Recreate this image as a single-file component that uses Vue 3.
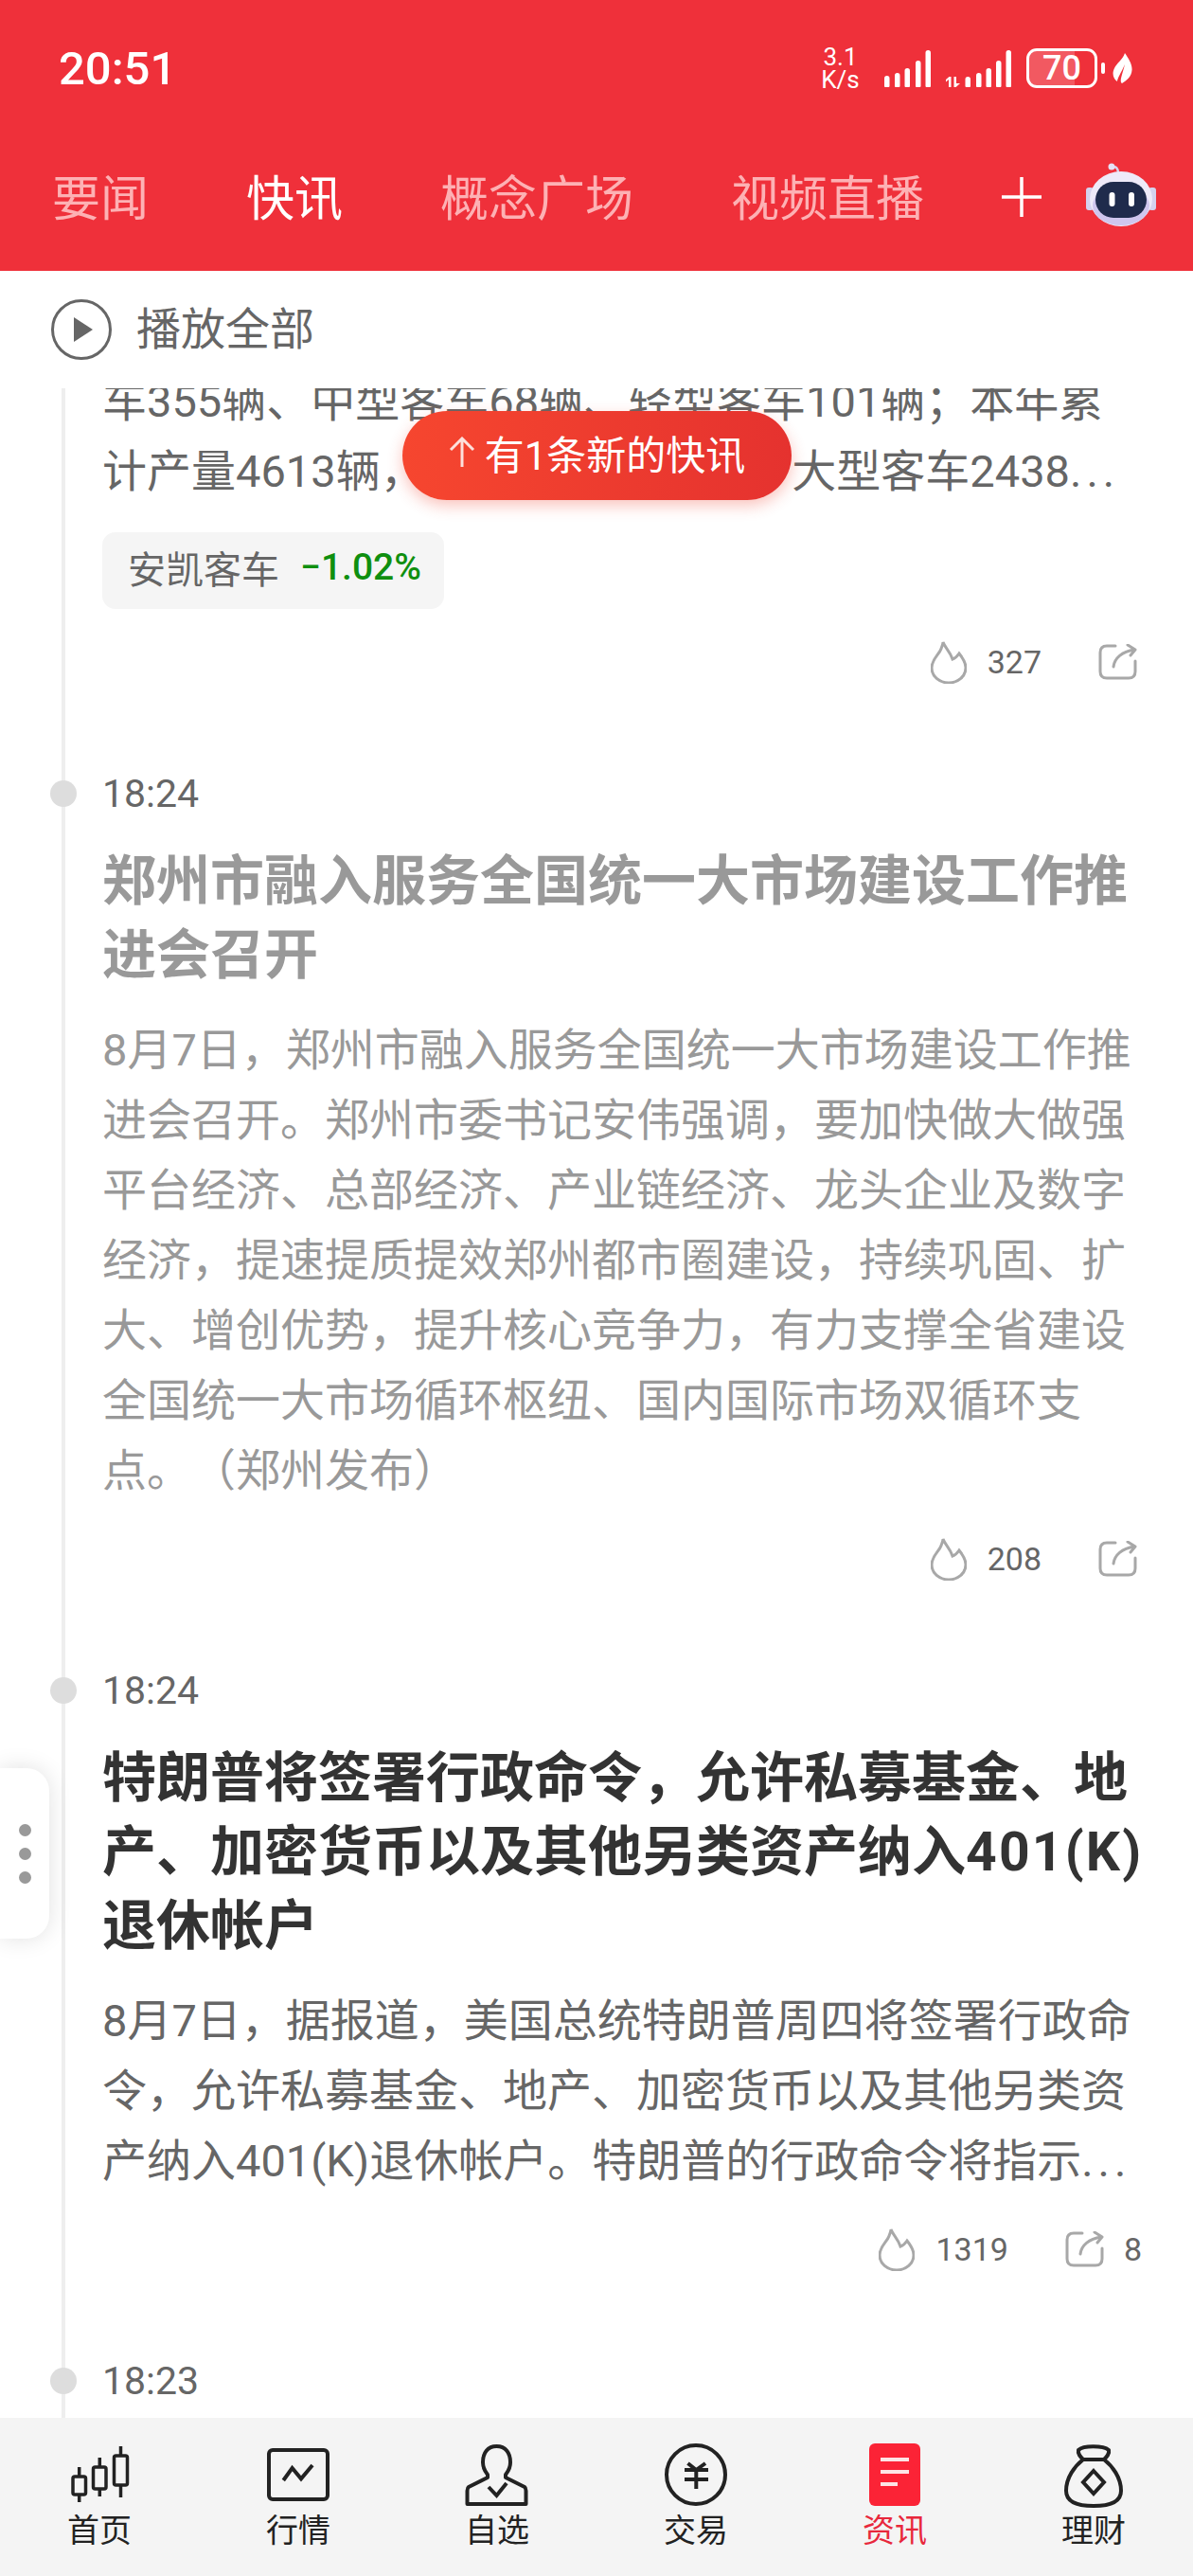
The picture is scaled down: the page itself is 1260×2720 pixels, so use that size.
<script setup>
const tabs = [
  { name: '要闻' },
  { name: '快讯', active: true },
  { name: '概念广场' },
  { name: '视频直播' },
]

const news = [
  {
    id: 1,
    lines: [
      '车355辆、中型客车68辆、轻型客车101辆；本年累',
      '计产量4613辆，\u3000\u3000\u3000\u3000\u3000\u3000\u3000\u3000 大型客车2438...',
    ],
    stock: { name: '安凯客车', change: '−1.02%' },
    hot: 327,
    partial: true,
  },
  {
    id: 2,
    time: '18:24',
    read: true,
    title: ['郑州市融入服务全国统一大市场建设工作推', '进会召开'],
    lines: [
      '8月7日，郑州市融入服务全国统一大市场建设工作推',
      '进会召开。郑州市委书记安伟强调，要加快做大做强',
      '平台经济、总部经济、产业链经济、龙头企业及数字',
      '经济，提速提质提效郑州都市圈建设，持续巩固、扩',
      '大、增创优势，提升核心竞争力，有力支撑全省建设',
      '全国统一大市场循环枢纽、国内国际市场双循环支',
      '点。（郑州发布）',
    ],
    hot: 208,
  },
  {
    id: 3,
    time: '18:24',
    title: [
      '特朗普将签署行政命令，允许私募基金、地',
      '产、加密货币以及其他另类资产纳入401(K)',
      '退休帐户',
    ],
    lines: [
      '8月7日，据报道，美国总统特朗普周四将签署行政命',
      '令，允许私募基金、地产、加密货币以及其他另类资',
      '产纳入401(K)退休帐户。特朗普的行政命令将指示...',
    ],
    hot: 1319,
    shares: 8,
  },
  { id: 4, time: '18:23', lines: [] },
]

const navItems = ['首页', '行情', '自选', '交易', '资讯', '理财']

// 标题里的英文数字比默认宽一点，单独包一层
const splitLatin = (line) => line.split(/([0-9A-Za-z()]+)/).filter(Boolean)
const isLatin = (part) => /^[0-9A-Za-z()]+$/.test(part)
</script>

<template>
  <div class="app">
    <header class="header">
      <div class="status">
        <span class="clock">20:51</span>
        <div class="status-right">
          <div class="speed"><span>3.1</span><span>K/s</span></div>
          <svg class="signal" width="49" height="40" viewBox="0 0 49 40" fill="#fff">
            <rect x="0" y="28" width="5.5" height="13" rx="2.7" />
            <rect x="11" y="25" width="5.5" height="16" rx="2.7" />
            <rect x="21.5" y="20" width="5.5" height="21" rx="2.7" />
            <rect x="33" y="12" width="5.5" height="29" rx="2.7" />
            <rect x="43.5" y="1" width="5.5" height="40" rx="2.7" />
          </svg>
          <svg class="signal" width="69" height="40" viewBox="0 0 69 40" fill="#fff">
            <path d="M3 32l-3 2.500v-2.500l3.500-3h2v12h-2.500zM8.500 29h2.500v7h4l-5.500 5-1-1z" />
            <rect x="20.5" y="29" width="5.5" height="12" rx="2.7" />
            <rect x="32" y="25" width="5.5" height="16" rx="2.7" />
            <rect x="42.5" y="20" width="5.5" height="21" rx="2.7" />
            <rect x="53" y="12" width="5.5" height="29" rx="2.7" />
            <rect x="63.5" y="1" width="5.5" height="40" rx="2.7" />
          </svg>
          <div class="battery">70</div>
          <svg class="leaf" width="21" height="33" viewBox="0 0 21 33">
            <path d="M13 0C17 6 21 12 20.500 18C20 25 15 29 10 32C7 30 10 24 13 12C9 21 5 27 5 30C1 27 -1 22 2 16C4 11 11 7 13 0Z" fill="#fff" />
          </svg>
        </div>
      </div>
      <nav class="tabs">
        <span v-for="tab in tabs" :key="tab.name" :class="['tab', { active: tab.active }]">{{ tab.name }}</span>
        <svg class="plus" width="42" height="42" viewBox="0 0 42 42">
          <path d="M0 21H42M21 0V42" stroke="#fff" stroke-width="3.500" />
        </svg>
        <svg class="robot" width="74" height="68" viewBox="0 0 74 68">
          <path d="M27 5C32 3 34 6 34 11" fill="none" stroke="#d9d4ee" stroke-width="2.500" />
          <circle cx="27" cy="4" r="3.500" fill="#e6e1f5" />
          <rect x="0" y="26" width="8" height="24" rx="3" fill="#d4d2ee" />
          <rect x="66" y="26" width="8" height="24" rx="3" fill="#d4d2ee" />
          <ellipse cx="37" cy="38" rx="33" ry="29" fill="#eeeaf9" />
          <ellipse cx="37" cy="45" rx="30" ry="21" fill="#cfc6ee" />
          <rect x="10" y="20" width="54" height="38" rx="19" fill="#1f2b4c" />
          <rect x="24.500" y="31" width="6" height="15" rx="3" fill="#fff" />
          <rect x="45" y="31" width="6" height="15" rx="3" fill="#fff" />
        </svg>
      </nav>
    </header>

    <div class="play-row">
      <svg width="66" height="66" viewBox="0 0 66 66">
        <circle cx="33" cy="33" r="30.500" fill="none" stroke="#666" stroke-width="3" />
        <path d="M25 20V46L45 33Z" fill="#666" />
      </svg>
      <span>播放全部</span>
    </div>

    <main class="list">
      <article v-for="item in news" :key="item.id" :class="['item', { read: item.read, partial: item.partial }]">
        <div v-if="item.time" class="time"><i class="dot"></i>{{ item.time }}</div>
        <h2 v-if="item.title" class="title">
          <span v-for="line in item.title" :key="line">
            <template v-for="part in splitLatin(line)" :key="part"><em v-if="isLatin(part)" class="latin">{{ part }}</em><template v-else>{{ part }}</template></template>
          </span>
        </h2>
        <div v-if="item.lines.length" class="body">
          <span v-for="line in item.lines" :key="line">{{ line.replace('...', '') }}<em v-if="line.endsWith('...')" class="dots">...</em></span>
        </div>
        <div v-if="item.stock" class="stock">
          <span class="stock-name">{{ item.stock.name }}</span>
          <span class="change">{{ item.stock.change }}</span>
        </div>
        <div v-if="item.hot" class="meta">
          <svg width="38" height="46" viewBox="0 0 38 46" fill="none" stroke="#a8a8a8" stroke-width="3">
            <path d="M13 2C15 8 20 11 23 20C26 19 28 17 30 14C34 19 37 24 37 29C37 38 29 45 19 45C9 45 1 38 1 29C1 20 9 15 11 9C12 6 13 4 13 2Z" />
          </svg>
          <span class="hot">{{ item.hot }}</span>
          <svg class="share" width="41" height="38" viewBox="0 0 41 38" fill="none" stroke="#a8a8a8" stroke-width="3" stroke-linecap="round" stroke-linejoin="round">
            <path d="M18 2H9Q2 2 2 9V29Q2 36 9 36H32Q39 36 39 29V18" />
            <path d="M16 24C17 15 25 8 38 6M31 1L39 6L34 12" />
          </svg>
          <span v-if="item.shares" class="shares">{{ item.shares }}</span>
        </div>
      </article>
    </main>

    <nav class="bottom">
      <div v-for="(label, i) in navItems" :key="label" :class="['nav-item', { current: i === 4 }]">
        <svg width="70" height="70" viewBox="0 0 70 70" fill="none" stroke="#222" stroke-width="3.500">
          <template v-if="i === 0">
            <path d="M13.700 27V64M35.300 17V58M57.500 5V59" />
            <rect x="7" y="37" width="13.500" height="19" rx="2" fill="#f4f4f4" />
            <rect x="28.500" y="27" width="13.500" height="23" rx="2" fill="#f4f4f4" />
            <rect x="50.500" y="15" width="14" height="31" rx="2" fill="#f4f4f4" />
          </template>
          <template v-else-if="i === 1">
            <rect x="4" y="9" width="62" height="52" rx="4" stroke-width="4" />
            <path d="M19.300 41L28.600 28L38 39.300L50 25" stroke-width="4" />
          </template>
          <template v-else-if="i === 2">
            <path d="M34.500 5C25 5 20 12 20 22C20 29 23 32 25 35V38L5 48Q3.500 49 3.500 52V66H65.500V52Q65.500 49 64 48L44 38V35C46 32 49 29 49 22C49 12 44 5 34.500 5Z" stroke-width="4" stroke-linejoin="round" />
            <path d="M26 48L34.500 57L45 44" stroke-width="4" />
          </template>
          <template v-else-if="i === 3">
            <circle cx="35" cy="35" r="31" stroke-width="4" />
            <path d="M26.500 23L35.300 30L45 23M23 30H48M23 40H48M35.300 30V50" stroke-width="4" />
          </template>
          <template v-else-if="i === 4">
            <rect x="8" y="2" width="54" height="66" rx="6" fill="#fb2336" stroke="none" />
            <path d="M20 19H50M20 32H50M20 45H38" stroke="#fde4e6" stroke-width="4" />
          </template>
          <template v-else>
            <path d="M24 19C21 16 18 13 19 9C24 4 45 4 51 9C52 13 49 16 46 19" stroke-width="4" />
            <path d="M24 19H46C55 26 64 38 64 52C64 64 52 68 35 68C18 68 6 64 6 52C6 38 15 26 24 19Z" stroke-width="4" />
            <path d="M35 31L46 43L35 55L24 43Z" stroke-width="4" />
          </template>
        </svg>
        <span>{{ label }}</span>
      </div>
    </nav>

    <div class="new-pill">
      <svg width="28" height="32" viewBox="0 0 28 32" fill="none" stroke="#fde0dc" stroke-width="3">
        <path d="M14 32V2M2 14L14 2L26 14" />
      </svg>
      <span>有1条新的快讯</span>
    </div>

    <div class="side-handle"><i></i><i></i><i></i></div>
  </div>
</template>

<style scoped>
.app {
  position: relative;
  width: 1260px;
  height: 2720px;
  display: flex;
  flex-direction: column;
  overflow: hidden;
  background: #fff;
  font-family: Roboto, "Noto Sans CJK SC", sans-serif;
  text-spacing-trim: space-all;
}

.header {
  height: 286px;
  background: #ef303a;
  color: #fff;
  flex: none;
}

.status {
  height: 130px;
  padding: 50px 64px 0 62px;
  box-sizing: border-box;
  display: flex;
  justify-content: space-between;
  align-items: flex-start;
}

.clock {
  font-size: 49px;
  line-height: 46px;
  font-weight: 500;
}

.status-right {
  display: flex;
  align-items: center;
  height: 44px;
}

.speed {
  width: 39px;
  display: flex;
  flex-direction: column;
  align-items: center;
  font-size: 26px;
  line-height: 24px;
  margin-right: 27px;
}

.signal {
  margin-right: 16px;
}

.battery {
  position: relative;
  width: 75px;
  height: 42px;
  box-sizing: border-box;
  border: 3px solid #fff;
  border-radius: 11px;
  background: linear-gradient(to right, rgba(255, 255, 255, 0.2) 70%, transparent 70%);
  font-size: 36px;
  line-height: 36px;
  font-weight: 500;
  text-align: center;
  margin-right: 16px;
}

.battery::after {
  content: "";
  position: absolute;
  right: -11px;
  top: 12px;
  width: 4px;
  height: 12px;
  border-radius: 2px;
  background: #fff;
}

.tabs {
  height: 156px;
  padding: 0 0 5px 55px;
  box-sizing: border-box;
  display: flex;
  align-items: center;
  gap: 103px;
  position: relative;
}

.tab {
  font-size: 51px;
  color: #fdb1b4;
}

.tab.active {
  color: #fff;
}

.plus {
  position: absolute;
  left: 1058px;
  top: 57px;
}

.robot {
  position: absolute;
  left: 1147px;
  top: 42px;
}

.play-row {
  height: 124px;
  padding-left: 53px;
  display: flex;
  align-items: center;
  gap: 25px;
  font-size: 47px;
  color: #666;
  box-sizing: border-box;
  flex: none;
}

.play-row span {
  margin-bottom: 9px;
}

.list {
  flex: 1;
  min-height: 0;
  overflow: hidden;
}

.item {
  position: relative;
  margin-left: 65px;
  padding: 0 0 84px 39px;
  border-left: 4px solid #eee;
}

.item.partial {
  margin-top: -23px;
}

.time {
  position: relative;
  height: 50px;
  font-size: 41px;
  line-height: 50px;
  color: #666;
}

.dot {
  position: absolute;
  left: -55px;
  top: 11px;
  width: 28px;
  height: 28px;
  border-radius: 50%;
  background: #ddd;
}

.title {
  margin: 29px 0 0;
  font-size: 57px;
  line-height: 78px;
  font-weight: 700;
  color: #333;
}

.title span,
.body span {
  display: block;
  white-space: pre;
}

.latin {
  font-style: normal;
  letter-spacing: 2.2px;
}

.dots {
  font-style: normal;
  letter-spacing: 5px;
}

.read .title {
  color: #999;
}

.body {
  margin-top: 24px;
  margin-bottom: 26px;
  font-size: 47px;
  line-height: 74px;
  color: #666;
}

.partial .body {
  margin-top: 0;
  margin-bottom: 27px;
}

.read .body {
  color: #999;
}

.stock {
  width: 361px;
  height: 81px;
  box-sizing: border-box;
  padding: 0 0 8px 27px;
  display: flex;
  align-items: center;
  gap: 22px;
  border-radius: 14px;
  background: #f5f5f5;
  color: #666;
  margin-bottom: 26px;
}

.stock-name {
  font-size: 40px;
}

.change {
  font-size: 39px;
  font-weight: 500;
  color: #0f8f0f;
}

.meta {
  height: 60px;
  display: flex;
  align-items: center;
  justify-content: flex-end;
  padding-right: 54px;
  color: #666;
  font-size: 34px;
}

.body + .meta {
  margin-top: 3px;
}

.hot {
  margin-left: 22px;
}

.share {
  margin-left: 60px;
}

.share:last-child {
  margin-right: 5px;
}

.shares {
  margin-left: 21px;
}

.bottom {
  flex: none;
  height: 167px;
  box-sizing: border-box;
  padding-top: 25px;
  display: grid;
  grid-template-columns: repeat(6, 210px);
  background: #f4f4f4;
}

.nav-item {
  display: flex;
  flex-direction: column;
  align-items: center;
  font-size: 34px;
  line-height: 40px;
  color: #222;
}

.nav-item span {
  margin-top: 4px;
}

.nav-item.current {
  color: #e8283c;
}

.new-pill {
  position: absolute;
  left: 425px;
  top: 434px;
  width: 411px;
  height: 94px;
  padding-bottom: 8px;
  box-sizing: border-box;
  display: flex;
  align-items: center;
  justify-content: center;
  gap: 10px;
  border-radius: 47px;
  background: linear-gradient(to right, #f6462f, #e5322f);
  box-shadow: 0 6px 16px rgba(240, 60, 40, 0.3);
  color: #fff;
  font-size: 42px;
}

.side-handle {
  position: absolute;
  left: 0;
  top: 1867px;
  width: 52px;
  height: 180px;
  display: flex;
  flex-direction: column;
  align-items: center;
  justify-content: center;
  gap: 12px;
  border-radius: 0 24px 24px 0;
  background: #fff;
  box-shadow: 0 0 24px rgba(0, 0, 0, 0.12);
}

.side-handle i {
  width: 13px;
  height: 13px;
  border-radius: 50%;
  background: #999;
}
</style>
